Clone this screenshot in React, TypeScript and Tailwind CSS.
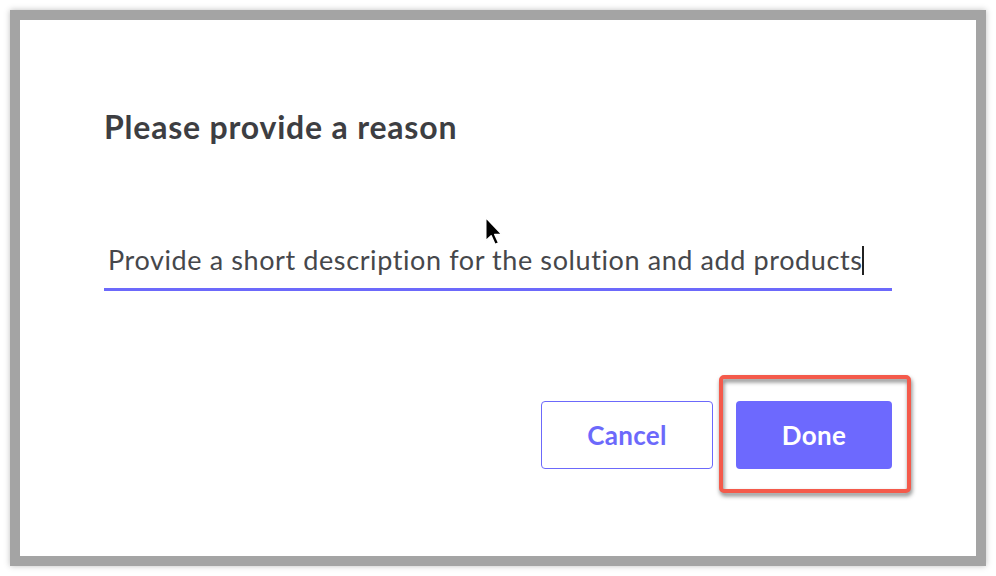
import React from "react";

const Cursor = () => (
  <svg
    className="absolute left-[484px] top-[216px]"
    width="20"
    height="30"
    viewBox="0 0 13 20"
  >
    <path
      d="M1 1 L1 16.5 L4.6 13.2 L7.2 19 L9.6 18 L7 12.3 L11.8 12.3 Z"
      fill="#000"
      stroke="#fff"
      strokeWidth="1"
      strokeLinejoin="round"
    />
  </svg>
);

export default function App() {
  return (
    <div className="relative w-[996px] h-[576px] bg-white p-[10px] font-['Lato','Noto_Sans',sans-serif]">
      <div className="h-full flex flex-col border-[10px] border-[#a4a4a4] bg-white shadow-[0_0_6px_rgba(0,0,0,0.25)] px-[84px] pt-[88px]">
        <h1 className="text-[32px] leading-[38px] font-bold tracking-[0.8px] text-[#3d3e42]">
          Please provide a reason
        </h1>

        {/* reason field */}
        <div className="mt-[98px] border-b-[3px] border-[#6c69fb] pl-[4px] pb-[12px]">
          <div className="text-[27px] leading-[32px] tracking-[0.6px] text-[#46474b] flex items-center">
            <span>Provide a short description for the solution and add products</span>
            <span className="inline-block w-[2px] h-[29px] bg-[#222]" />
          </div>
        </div>

        <div className="mt-[110px] flex justify-end gap-[23px]">
          <button className="w-[172px] h-[68px] rounded-[4px] border border-[#6c69fb] bg-white text-[#6c69fb] text-[26px] tracking-[0.3px] font-bold">
            Cancel
          </button>
          <div className="relative">
            <button className="w-[156px] h-[68px] rounded-[4px] bg-[#6d69fe] text-white text-[26px] tracking-[0.3px] font-bold">
              Done
            </button>
            <div className="absolute -left-[17px] -top-[26px] -right-[19px] -bottom-[24px] border-[4px] border-[#f45a4b] rounded-[5px] drop-shadow-[1px_3px_2px_rgba(0,0,0,0.5)]" />
          </div>
        </div>
      </div>
      <Cursor />
    </div>
  );
}
